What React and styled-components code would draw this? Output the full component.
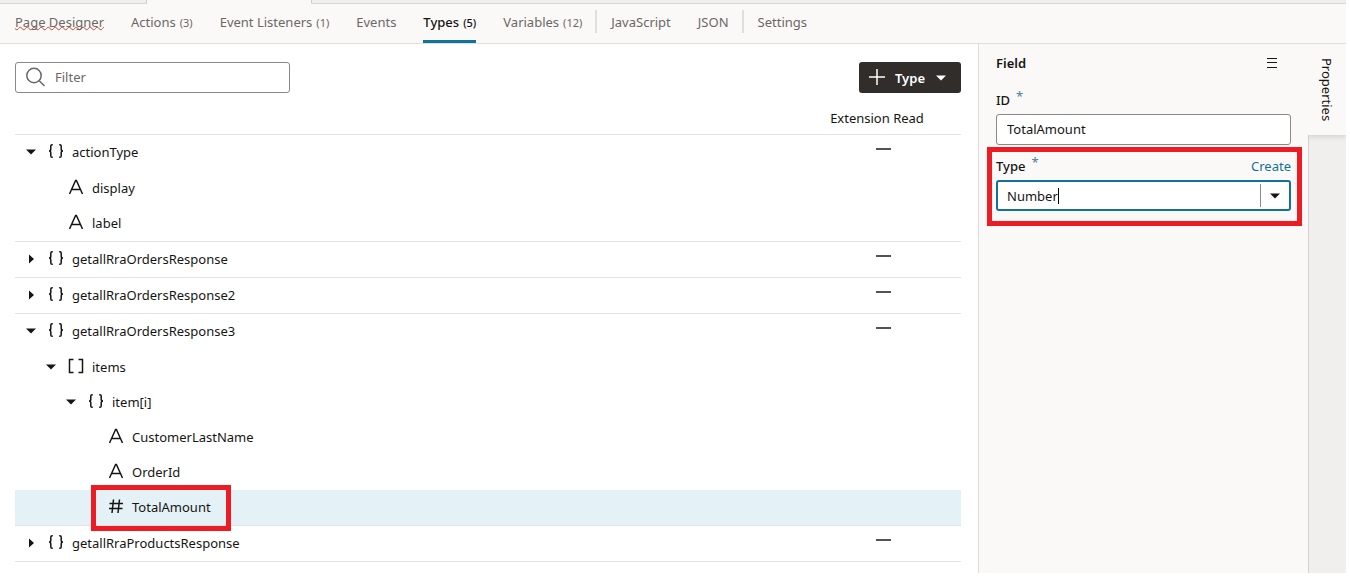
import React from "react";
import styled, { createGlobalStyle } from "styled-components";

const GlobalStyle = createGlobalStyle`
  * {
    box-sizing: border-box;
  }
  body {
    margin: 0;
    background: #ffffff;
    color: #161513;
    font-family: "Noto Sans", "Open Sans", sans-serif;
    font-size: 13px;
    line-height: 18px;
  }
  button,
  input {
    font: inherit;
    color: inherit;
  }
`;

const Page = styled.div`
  display: flex;
  flex-direction: column;
  min-height: 100vh;
  padding: 0 4px 4px 0;
`;

const FileTabs = styled.div`
  display: flex;
  height: 4px;
  background: #f1efed;
`;
const FileTab = styled.div`
  flex: ${(props) => props.$width};
  border-bottom: 1px solid ${(props) => (props.$active ? "#faf9f8" : "#d9d8d6")};
  border-right: ${(props) => (props.$last ? "none" : "1px solid #cfcdcb")};
  background: ${(props) => (props.$active ? "#faf9f8" : "#f1efed")};
`;

const TabBar = styled.nav`
  display: flex;
  align-items: stretch;
  gap: 27px;
  height: 40px;
  padding-left: 15px;
  background: #faf9f8;
  border-bottom: 1px solid #e0dfde;
`;
const Tab = styled.a`
  padding-top: 9px;
  border-bottom: 3px solid ${(props) => (props.$active ? "#11739a" : "transparent")};
  color: ${(props) => (props.$active ? "#161513" : "#6a6865")};
  font-weight: ${(props) => (props.$active ? 500 : 400)};
  text-decoration: none;
  white-space: nowrap;
`;
const Misspelled = styled.span`
  text-decoration: underline wavy #c74634 1px;
  text-decoration-skip-ink: none;
  text-underline-offset: -1px;
`;
const Count = styled.span`
  margin-left: 4px;
  font-size: 11px;
`;
const TabDivider = styled.span`
  width: 2px;
  height: 23px;
  margin: 6px -13px 0 -14px;
  background: #e0dfde;
`;

const Workspace = styled.div`
  display: flex;
  flex: 1;
`;

const Main = styled.main`
  flex: 1;
  padding: 18px 17px 0 15px;
`;
const Toolbar = styled.div`
  display: flex;
  justify-content: space-between;
`;
const FilterBox = styled.label`
  display: flex;
  align-items: center;
  gap: 9px;
  width: 275px;
  height: 31px;
  padding: 0 9px;
  border: 1px solid #8b8987;
  border-radius: 3px;
  background: #ffffff;
`;
const FilterInput = styled.input`
  flex: 1;
  min-width: 0;
  border: none;
  outline: none;
  padding: 0 0 2px;
  background: transparent;
  &::placeholder {
    color: #6a6865;
    opacity: 1;
  }
`;
const TypeButton = styled.button`
  display: flex;
  align-items: center;
  justify-content: space-between;
  width: 102px;
  height: 31px;
  padding: 0 14px 0 10px;
  border: none;
  border-radius: 3px;
  background: #312d2a;
  color: #ffffff;
  font-weight: 600;
`;

const TypesTable = styled.table`
  width: 100%;
  margin-top: 16px;
  table-layout: fixed;
  border-collapse: separate;
  border-spacing: 0;
`;
const HeadCell = styled.th`
  width: ${(props) => props.$width};
  height: 25px;
  padding: 0 12px 7px 0;
  border-bottom: 1px solid #e4e3e2;
  font-weight: 400;
`;
const Cell = styled.td`
  height: ${(props) => (props.$tall ? 36 : 35)}px;
  padding: 0;
  background: ${(props) => (props.$selected ? "#e4f1f7" : "transparent")};
  text-align: center;
  vertical-align: middle;
`;
const TypeGroup = styled.tbody`
  tr:last-child > td {
    height: 36px;
    border-bottom: 1px solid #e4e3e2;
  }
`;
const TreeItem = styled.div`
  position: relative;
  display: flex;
  align-items: center;
  padding-bottom: 2px;
  padding-left: ${(props) => 10 + props.$level * 20}px;
  text-align: left;
`;
const Toggle = styled.button`
  display: flex;
  width: 12px;
  height: 12px;
  margin-right: 11px;
  padding: 0;
  border: none;
  background: transparent;
`;
const ToggleSpace = styled.span`
  width: 23px;
`;
const KindIcon = styled.svg`
  width: 16px;
  height: 16px;
  margin: 0 8px 2px 0;
  fill: none;
  stroke: #161513;
  stroke-width: 1.5;
`;
const AccessIcon = styled.svg`
  display: block;
  margin: 0 auto 8px;
`;

const Highlight = styled.span`
  position: absolute;
  inset: ${(props) => props.$inset};
  width: ${(props) => props.$width};
  border: 5px solid #ed1c24;
  pointer-events: none;
`;

const Panel = styled.aside`
  width: 330px;
  padding: 10px 17px 0;
  border-left: 1px solid #dedddb;
  background: #faf9f8;
`;
const PanelHeader = styled.div`
  display: flex;
  justify-content: space-between;
  align-items: center;
  padding-right: 13px;
`;
const PanelTitle = styled.h2`
  margin: 0;
  font-size: 13px;
  font-weight: 600;
`;
const IconButton = styled.button`
  display: flex;
  padding: 0;
  border: none;
  background: transparent;
`;
const Field = styled.div`
  position: relative;
  margin-top: ${(props) => props.$gap}px;
`;
const FieldHeader = styled.div`
  display: flex;
  height: 23px;
`;
const Label = styled.label`
  font-weight: 500;
`;
const Required = styled.span`
  margin: -4px 0 0 6px;
  color: #4f7d98;
`;
const CreateLink = styled.a`
  margin-left: auto;
  color: #11739a;
  text-decoration: none;
`;
const TextInput = styled.input`
  display: block;
  width: 100%;
  height: 31px;
  padding: 0 10px 2px;
  border: 1px solid #8b8987;
  border-radius: 3px;
  background: #ffffff;
`;
const ComboBox = styled.div`
  position: relative;
  display: flex;
  align-items: center;
  height: 31px;
  border: 2px solid #11739a;
  border-radius: 3px;
  background: #ffffff;
`;
const ComboInput = styled.input`
  flex: 1;
  min-width: 0;
  height: 24px;
  padding: 0 9px;
  border: none;
  outline: none;
  background: transparent;
`;
const ComboButton = styled.button`
  display: flex;
  align-items: center;
  justify-content: center;
  width: 29px;
  height: 23px;
  padding: 0;
  border: none;
  border-left: 1px solid #8b8987;
  background: transparent;
`;
const TextCursor = styled.span`
  position: absolute;
  left: 60px;
  width: 1px;
  height: 16px;
  background: #000000;
`;

const Rail = styled.div`
  width: 38px;
  border-left: 1px solid #d2d1cf;
  background: #f0efed;
`;
const RailTab = styled.button`
  display: flex;
  align-items: center;
  width: 38px;
  height: 91px;
  margin-left: -1px;
  padding: 14px 0 0;
  border: none;
  background: #faf9f8;
  box-shadow: 0 2px 5px rgba(0, 0, 0, 0.12);
  clip-path: inset(0 0 -8px 0);
  line-height: 38px;
  writing-mode: vertical-rl;
`;

const tabs = [
  { name: "Page Designer", misspelled: true },
  { name: "Actions", count: 3 },
  { name: "Event Listeners", count: 1 },
  { name: "Events" },
  { name: "Types", count: 5, active: true },
  { name: "Variables", count: 12 },
  { name: "JavaScript", divider: true },
  { name: "JSON" },
  { name: "Settings", divider: true },
];

const groups = [
  [
    { name: "actionType", kind: "object", level: 0, open: true },
    { name: "display", kind: "string", level: 1 },
    { name: "label", kind: "string", level: 1 },
  ],
  [{ name: "getallRraOrdersResponse", kind: "object", level: 0, open: false }],
  [{ name: "getallRraOrdersResponse2", kind: "object", level: 0, open: false }],
  [
    { name: "getallRraOrdersResponse3", kind: "object", level: 0, open: true },
    { name: "items", kind: "array", level: 1, open: true },
    { name: "item[i]", kind: "object", level: 2, open: true },
    { name: "CustomerLastName", kind: "string", level: 3 },
    { name: "OrderId", kind: "string", level: 3 },
    { name: "TotalAmount", kind: "number", level: 3, selected: true },
  ],
  [{ name: "getallRraProductsResponse", kind: "object", level: 0, open: false }],
];

const kindPaths = {
  object:
    "M4.8 1.7H4.2Q2.8 1.7 2.8 3V6.2Q2.8 8 1 8Q2.8 8 2.8 9.8V13Q2.8 14.3 4.2 14.3H4.8M11.2 1.7H11.8Q13.2 1.7 13.2 3V6.2Q13.2 8 15 8Q13.2 8 13.2 9.8V13Q13.2 14.3 11.8 14.3H11.2",
  array: "M5.5 1.5H1.5V14.5H5.5M10.5 1.5H14.5V14.5H10.5",
  string: "M1.5 15L7.6 1.5H8.4L14.5 15M3.8 10.5H12.2",
  number: "M5.5 1.5L4 15M11.5 1.5L10 15M1.5 5.5H15M1 10.5H14.5",
};

const Caret = ({ direction, color = "#161513" }) => (
  <svg width="12" height="12" viewBox="0 0 12 12" fill={color}>
    <path d={direction === "right" ? "M4 1.5L9 6L4 10.5Z" : "M1 3.5H11L6 8.5Z"} />
  </svg>
);

const TreeRow = ({ item, tall }) => {
  const isBranch = item.open !== undefined;

  return (
    <tr>
      <Cell $selected={item.selected} $tall={tall}>
        <TreeItem $level={item.level}>
          {isBranch ? (
            <Toggle aria-label={item.open ? "Collapse" : "Expand"}>
              <Caret direction={item.open ? "down" : "right"} />
            </Toggle>
          ) : (
            <ToggleSpace />
          )}
          <KindIcon viewBox="0 0 16 16">
            <path d={kindPaths[item.kind]} />
          </KindIcon>
          <span>{item.name}</span>
          {item.selected && <Highlight $inset="-13px auto -13px 76px" $width="140px" />}
        </TreeItem>
      </Cell>
      <Cell $selected={item.selected} $tall={tall}>
        {item.level === 0 && (
          <AccessIcon width="15" height="2" viewBox="0 0 15 2">
            <path d="M0 1H15" stroke="#55534f" strokeWidth="2" />
          </AccessIcon>
        )}
      </Cell>
    </tr>
  );
};

const TypesEditor = () => (
  <Main>
    <Toolbar>
      <FilterBox>
        <svg width="21" height="21" viewBox="0 0 21 21" fill="none" stroke="#6a6865" strokeWidth="1.5">
          <circle cx="9" cy="8.5" r="7.2" />
          <path d="M14.2 13.7L19.5 19" />
        </svg>
        <FilterInput type="text" placeholder="Filter" aria-label="Filter" />
      </FilterBox>
      <TypeButton>
        <svg width="16" height="20" viewBox="0 0 16 20" stroke="#ffffff" strokeWidth="1.5">
          <path d="M8 1V17M0 9H16" />
        </svg>
        Type
        <Caret direction="down" color="#ffffff" />
      </TypeButton>
    </Toolbar>
    <TypesTable>
      <thead>
        <tr>
          <HeadCell aria-label="Name" />
          <HeadCell $width="156px">Extension Read</HeadCell>
        </tr>
      </thead>
      {groups.map((items) => (
        <TypeGroup key={items[0].name}>
          {items.map((item) => (
            <TreeRow key={item.name} item={item} tall={item.level === 0 && item.open} />
          ))}
        </TypeGroup>
      ))}
    </TypesTable>
  </Main>
);

const FieldPanel = () => (
  <Panel>
    <PanelHeader>
      <PanelTitle>Field</PanelTitle>
      <IconButton aria-label="Panel menu">
        <svg width="12" height="12" viewBox="0 0 12 12" stroke="#161513">
          <path d="M1 1.5H11M1 5.5H11M1 10.5H11" />
        </svg>
      </IconButton>
    </PanelHeader>
    <Field $gap={19}>
      <FieldHeader>
        <Label htmlFor="field-id">ID</Label>
        <Required>*</Required>
      </FieldHeader>
      <TextInput id="field-id" defaultValue="TotalAmount" />
    </Field>
    <Field $gap={12}>
      <FieldHeader>
        <Label htmlFor="field-type">Type</Label>
        <Required>*</Required>
        <CreateLink href="#create">Create</CreateLink>
      </FieldHeader>
      <ComboBox>
        <ComboInput id="field-type" role="combobox" aria-expanded="false" defaultValue="Number" />
        <TextCursor />
        <ComboButton aria-label="Show types">
          <Caret direction="down" />
        </ComboButton>
      </ComboBox>
      <Highlight $inset="-10px -11px -15px -9px" />
    </Field>
  </Panel>
);

const App = () => (
  <>
    <GlobalStyle />
    <Page>
      <FileTabs>
        <FileTab $width={146} />
        <FileTab $width={164} $active />
        <FileTab $width={1036} $last />
      </FileTabs>
      <TabBar>
        {tabs.map((tab) => (
          <React.Fragment key={tab.name}>
            {tab.divider && <TabDivider />}
            <Tab href="#" $active={tab.active}>
              {tab.misspelled ? <Misspelled>{tab.name}</Misspelled> : tab.name}
              {tab.count && <Count>({tab.count})</Count>}
            </Tab>
          </React.Fragment>
        ))}
      </TabBar>
      <Workspace>
        <TypesEditor />
        <FieldPanel />
        <Rail>
          <RailTab>Properties</RailTab>
        </Rail>
      </Workspace>
    </Page>
  </>
);

export default App;
